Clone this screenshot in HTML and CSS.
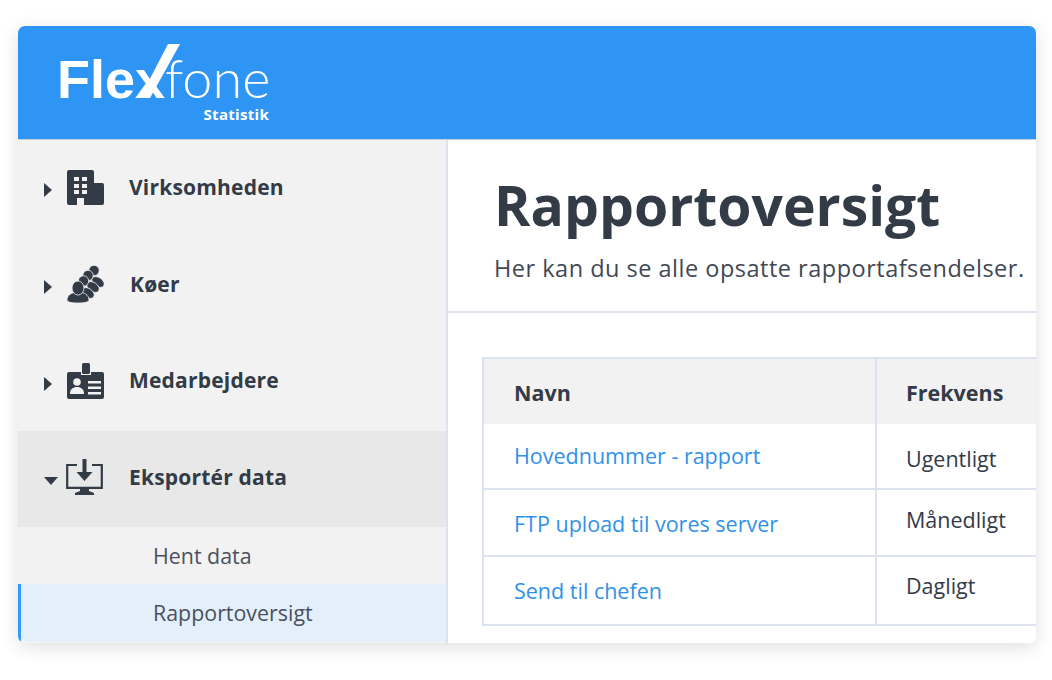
FILE: index.html
```html
<!DOCTYPE html>
<html lang="da">
<head>
<meta charset="utf-8">
<title>Rapportoversigt</title>
<link rel="stylesheet" href="styles.css">
</head>
<body>
<div class="card">
  <header class="topbar">
    <div class="logo">
      <div class="wordmark"><span class="flex">Flex</span><span class="fone">fone</span>
        <svg class="tick" viewBox="0 0 50 60" width="50" height="60" aria-hidden="true"><path d="M5 54 L33 0 L45 0 L15 54 Z" fill="#fff"/></svg>
      </div>
      <div class="tag">Statistik</div>
    </div>
  </header>
  <div class="body">
    <nav class="side">
      <a class="item">
        <span class="caret"></span>
        <svg class="icon" viewBox="0 0 37 35" width="37" height="35" aria-hidden="true">
          <path fill="#333b47" fill-rule="evenodd" d="M2 0H25a2 2 0 0 1 2 2V13H35a2 2 0 0 1 2 2V33a2 2 0 0 1-2 2H17V28H10V35H2a2 2 0 0 1-2-2V2a2 2 0 0 1 2-2ZM7 7v4h5V7ZM15 7v4h5V7ZM7 14v4h5v-4ZM15 14v4h5v-4ZM7 20v4h5v-4ZM15 20v4h5v-4Z"/>
        </svg>
        <span class="label">Virksomheden</span>
      </a>
      <a class="item item-koer">
        <span class="caret"></span>
        <svg class="icon" viewBox="0 0 37 38" width="37" height="38" aria-hidden="true">
          <g fill="#333b47" stroke="#f2f2f2" stroke-width="0.8">
            <ellipse cx="31" cy="17" rx="7" ry="4.500" transform="rotate(35 31 17)"/>
            <circle cx="27" cy="5.500" r="5.200"/>
            <ellipse cx="26" cy="22" rx="7" ry="4.500" transform="rotate(35 26 22)"/>
            <circle cx="21" cy="10.500" r="5.200"/>
            <ellipse cx="21" cy="28" rx="7" ry="4.500" transform="rotate(35 21 28)"/>
            <circle cx="16.500" cy="16" r="5.200"/>
            <path d="M0 35c0-5 5-8 11-8s11 3 11 8c0 2-4 3-11 3s-11-1-11-3Z"/>
            <ellipse cx="11" cy="23" rx="6" ry="7"/>
          </g>
        </svg>
        <span class="label">Køer</span>
      </a>
      <a class="item item-staff">
        <span class="caret"></span>
        <svg class="icon" viewBox="0 0 37 37" width="37" height="37" aria-hidden="true">
          <path fill="#333b47" d="M2 9H14V12H24V9H35a2 2 0 0 1 2 2V34a2 2 0 0 1-2 2H2a2 2 0 0 1-2-2V11a2 2 0 0 1 2-2Z"/>
          <rect x="15" y="0" width="8" height="11" rx="1.5" fill="#333b47"/>
          <circle cx="10" cy="19" r="3.8" fill="#f2f2f2"/>
          <path fill="#f2f2f2" d="M3 31c0-5 3-7 7-7s7 2 7 7Z"/>
          <path fill="#f2f2f2" d="M21 18h13v2.4H21ZM21 23.5h13v2.4H21ZM21 29h13v2.4H21Z"/>
        </svg>
        <span class="label">Medarbejdere</span>
      </a>
      <a class="item item-open">
        <span class="caret caret-down"></span>
        <svg class="icon" viewBox="0 0 37 37" width="37" height="37" aria-hidden="true">
          <path fill="none" stroke="#333b47" stroke-width="2.2" d="M11 6H1.200V28.800H35.800V6H26"/>
          <path fill="#333b47" d="M16.500 0h4V13h6L18.500 22 10.500 13h6ZM14 29h9v3l5 2v2H9v-2l5-2Z"/>
        </svg>
        <span class="label">Eksportér data</span>
      </a>
      <a class="sub">Hent data</a>
      <a class="sub sub-active">Rapportoversigt</a>
    </nav>
    <main class="main">
      <section class="intro">
        <h1>Rapportoversigt</h1>
        <p>Her kan du se alle opsatte rapportafsendelser.</p>
      </section>
      <div class="table">
        <div class="cell head">Navn</div>
        <div class="cell head col2">Frekvens</div>
        <div class="cell row1 link-cell"><a>Hovednummer - rapport</a></div>
        <div class="cell row1 col2">Ugentligt</div>
        <div class="cell row2 link-cell"><a>FTP upload til vores server</a></div>
        <div class="cell row2 col2">Månedligt</div>
        <div class="cell row3 link-cell"><a>Send til chefen</a></div>
        <div class="cell row3 col2">Dagligt</div>
      </div>
    </main>
  </div>
</div>
</body>
</html>
```

FILE: styles.css
```css
* { box-sizing: border-box; }
html, body { height: 100%; }
body {
  margin: 0;
  background: #fff;
  padding: 26px 16px 37px 18px;
  overflow: hidden;
  font-family: "Open Sans", "Liberation Sans", sans-serif;
  color: #333b47;
}
.card {
  height: 617px;
  border-radius: 7px;
  overflow: hidden;
  background: #fff;
  box-shadow: 0 4px 18px rgba(0, 0, 0, 0.13);
  display: flex;
  flex-direction: column;
}
.topbar {
  height: 114px;
  flex: none;
  background: #2f95f5;
  border-bottom: 1px solid #c9ced6;
  padding: 17px 0 0 39px;
  color: #fff;
}
.logo { width: 212px; }
.wordmark {
  position: relative;
  height: 62px;
  font-family: "Lato", "Open Sans", sans-serif;
  font-size: 54px;
  line-height: 70px;
  white-space: nowrap;
}
.flex { font-family: "Liberation Sans", sans-serif; font-weight: 700; }
.fone { font-weight: 300; font-family: "Lato", sans-serif; }
.tick { position: absolute; left: 78px; top: 1px; }
.tag {
  text-align: right;
  font-weight: 700;
  font-size: 15px;
  line-height: 16px;
  letter-spacing: 0.3px;
  margin-top: 1px;
}
.body { flex: 1; display: flex; min-height: 0; }
.side {
  width: 430px;
  flex: none;
  background: #f2f2f2;
  border-right: 2px solid #dde3ee;
  display: flex;
  flex-direction: column;
}
.item {
  height: 97px;
  flex: none;
  display: flex;
  align-items: center;
  padding-left: 26px;
  font-weight: 700;
  font-size: 21px;
}
.item-open { background: #e8e8e8; height: 96px; }
.caret {
  width: 0;
  height: 0;
  flex: none;
  margin-right: 15px;
  margin-top: 3px;
  border-left: 8px solid #333b47;
  border-top: 7px solid transparent;
  border-bottom: 7px solid transparent;
}
.caret-down {
  margin-right: 8px;
  margin-top: 3px;
  border-left: 7.5px solid transparent;
  border-right: 7.5px solid transparent;
  border-top: 8px solid #333b47;
  border-bottom: 0;
}
.icon { flex: none; margin-right: 25px; margin-top: -3px; }
.label { letter-spacing: 0.2px; margin-top: -4px; }
.item-koer .icon { margin-right: 26px; }
.item-open .icon { margin-right: 26px; }
.item-staff .label { margin-top: -6px; }
.sub {
  height: 57px;
  flex: none;
  display: flex;
  align-items: center;
  padding-left: 135px;
  font-size: 21.4px;
  color: #4a515c;
}
.sub-active {
  background: #e3f0fc;
  border-left: 3px solid #3399ff;
  padding-left: 132px;
}
.main { flex: 1; min-width: 0; overflow: hidden; background: #fff; }
.intro {
  height: 173px;
  padding: 29px 0 0 46px;
  border-bottom: 2px solid #dde3ee;
  white-space: nowrap;
}
h1 {
  margin: 0;
  font-size: 55.3px;
  font-weight: 700;
  line-height: 72px;
}
.intro p {
  margin: 12px 0 0 0;
  font-size: 23.5px;
  line-height: 30px;
  letter-spacing: 0.5px;
  color: #414853;
}
.table {
  margin: 44px 0 0 34px;
  width: 800px;
  display: grid;
  grid-template-columns: 391px 1fr;
  grid-template-rows: 65px 66px 67px 67px;
  border: 2px solid #dde3ee;
  border-right: 0;
  font-size: 21.5px;
}
.cell {
  padding: 14px 0 0 30px;
  line-height: 38px;
  border-bottom: 2px solid #dde3ee;
  white-space: nowrap;
}
.head {
  background: #f2f2f2;
  font-weight: 700;
  border-bottom: 0;
  padding-top: 15px;
}
.col2 { border-left: 2px solid #dde3ee; padding-left: 29px; }
.row3 { border-bottom: 0; }
.row1.link-cell { padding-top: 13px; }
.row1.col2 { padding-top: 16px; }
.row2.link-cell { padding-top: 15px; }
.row2.col2 { padding-top: 11px; }
.row3.link-cell { padding-top: 15px; }
.row3.col2 { padding-top: 10px; }
.link-cell a { color: #3091ea; }
```
